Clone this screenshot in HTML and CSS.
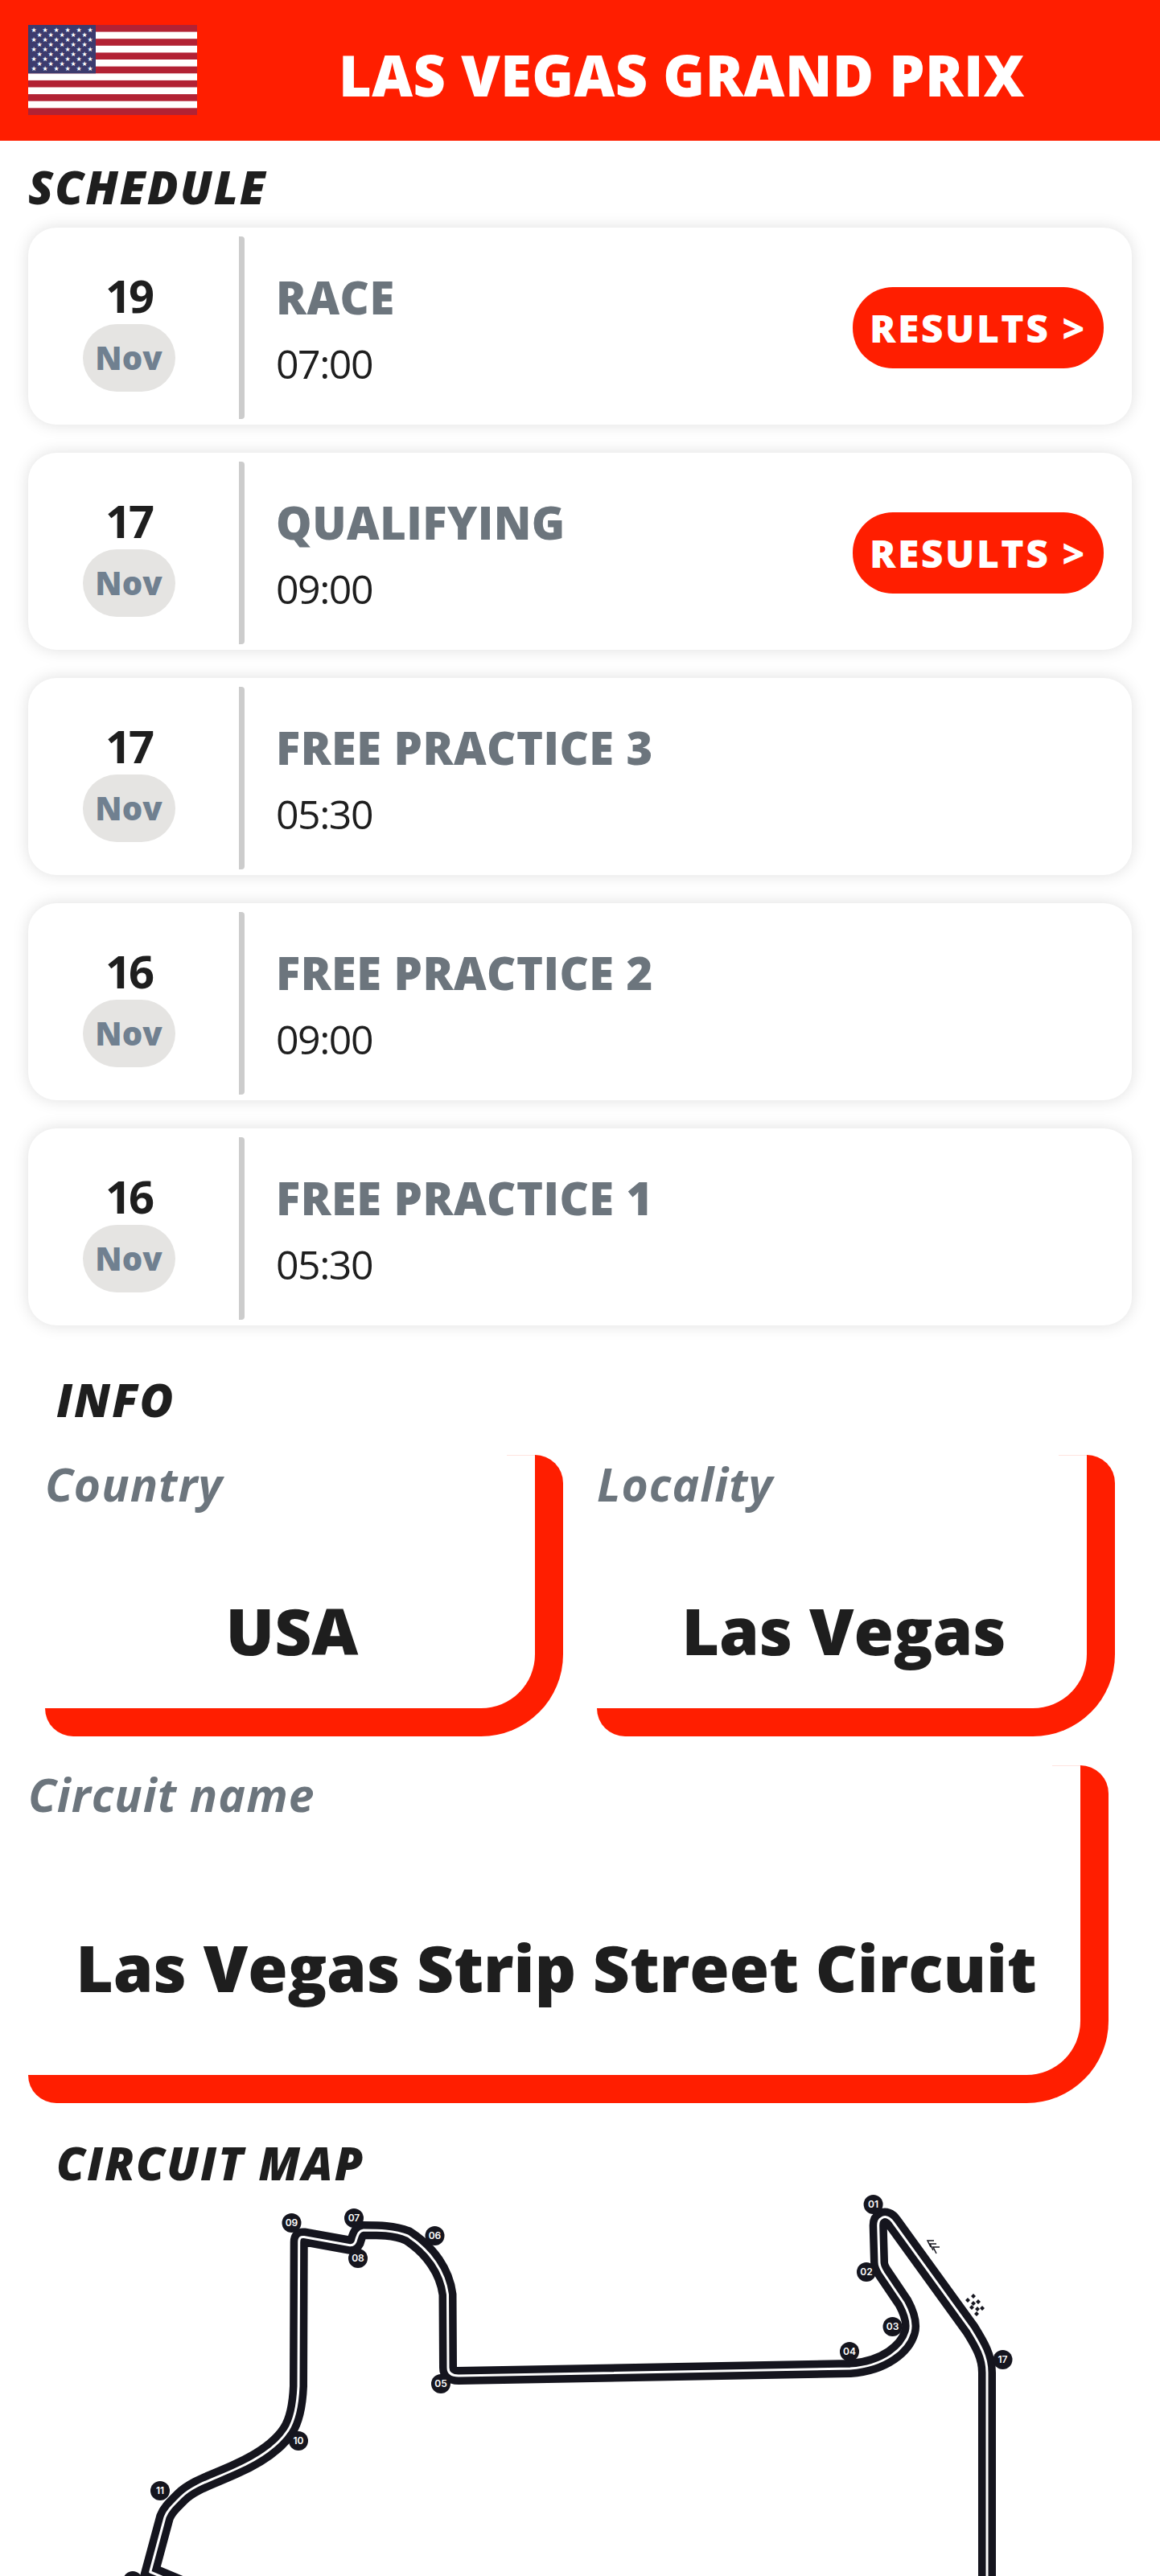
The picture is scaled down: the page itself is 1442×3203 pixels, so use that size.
FILE: index.html
```html
<!DOCTYPE html>
<html lang="en">
<head>
<meta charset="utf-8">
<title>Las Vegas Grand Prix</title>
<link rel="stylesheet" href="styles.css">
</head>
<body>
<header class="topbar">
  <svg class="flag" viewBox="0 0 210 112" aria-hidden="true">
    <rect width="210" height="112" fill="#b22234"/>
    <g fill="#fff">
      <rect y="8.6" width="210" height="8.6"/><rect y="25.8" width="210" height="8.6"/><rect y="43" width="210" height="8.6"/>
      <rect y="60.3" width="210" height="8.6"/><rect y="77.5" width="210" height="8.6"/><rect y="94.7" width="210" height="8.6"/>
    </g>
    <rect width="84" height="60.3" fill="#3c3b6e"/>
    <g fill="#fff" font-family="'DejaVu Sans', sans-serif" font-size="8" text-anchor="middle">
      <text x="7" y="9">★</text><text x="21" y="9">★</text><text x="35" y="9">★</text><text x="49" y="9">★</text><text x="63" y="9">★</text><text x="77" y="9">★</text>
      <text x="14" y="15">★</text><text x="28" y="15">★</text><text x="42" y="15">★</text><text x="56" y="15">★</text><text x="70" y="15">★</text>
      <text x="7" y="21">★</text><text x="21" y="21">★</text><text x="35" y="21">★</text><text x="49" y="21">★</text><text x="63" y="21">★</text><text x="77" y="21">★</text>
      <text x="14" y="27">★</text><text x="28" y="27">★</text><text x="42" y="27">★</text><text x="56" y="27">★</text><text x="70" y="27">★</text>
      <text x="7" y="33">★</text><text x="21" y="33">★</text><text x="35" y="33">★</text><text x="49" y="33">★</text><text x="63" y="33">★</text><text x="77" y="33">★</text>
      <text x="14" y="39">★</text><text x="28" y="39">★</text><text x="42" y="39">★</text><text x="56" y="39">★</text><text x="70" y="39">★</text>
      <text x="7" y="45">★</text><text x="21" y="45">★</text><text x="35" y="45">★</text><text x="49" y="45">★</text><text x="63" y="45">★</text><text x="77" y="45">★</text>
      <text x="14" y="51">★</text><text x="28" y="51">★</text><text x="42" y="51">★</text><text x="56" y="51">★</text><text x="70" y="51">★</text>
      <text x="7" y="57">★</text><text x="21" y="57">★</text><text x="35" y="57">★</text><text x="49" y="57">★</text><text x="63" y="57">★</text><text x="77" y="57">★</text>
    </g>
  </svg>
  <h1 class="race-title">LAS VEGAS GRAND PRIX</h1>
</header>

<h2 class="heading heading-schedule">SCHEDULE</h2>
<section class="sessions">
  <article class="session">
    <div class="date"><span class="day">19</span><span class="month">Nov</span></div>
    <div class="detail"><span class="name">RACE</span><span class="time">07:00</span></div>
    <a class="results" href="#">RESULTS &gt;</a>
  </article>
  <article class="session">
    <div class="date"><span class="day">17</span><span class="month">Nov</span></div>
    <div class="detail"><span class="name">QUALIFYING</span><span class="time">09:00</span></div>
    <a class="results" href="#">RESULTS &gt;</a>
  </article>
  <article class="session">
    <div class="date"><span class="day">17</span><span class="month">Nov</span></div>
    <div class="detail"><span class="name">FREE PRACTICE 3</span><span class="time">05:30</span></div>
  </article>
  <article class="session">
    <div class="date"><span class="day">16</span><span class="month">Nov</span></div>
    <div class="detail"><span class="name">FREE PRACTICE 2</span><span class="time">09:00</span></div>
  </article>
  <article class="session">
    <div class="date"><span class="day">16</span><span class="month">Nov</span></div>
    <div class="detail"><span class="name">FREE PRACTICE 1</span><span class="time">05:30</span></div>
  </article>
</section>

<h2 class="heading heading-info">INFO</h2>
<section class="info">
  <div class="info-row">
    <div class="info-card"><span class="label">Country</span><span class="value">USA</span></div>
    <div class="info-card"><span class="label">Locality</span><span class="value">Las Vegas</span></div>
  </div>
  <div class="info-card info-wide"><span class="label">Circuit name</span><span class="value">Las Vegas Strip Street Circuit</span></div>
</section>

<h2 class="heading heading-map">CIRCUIT MAP</h2>
<svg class="map" viewBox="0 2727 1442 476" aria-label="Circuit map">
  <g fill="none">
    <path stroke="#15151e" stroke-width="22" stroke-linejoin="miter" stroke-miterlimit="3" d="M1227 3215 L1227 2950 C1227 2930 1218 2915 1206.700 2896.700 L1110 2763 C1106 2757 1100 2755 1096 2758 C1092 2760 1091.500 2763 1091.700 2768 L1093 2813 C1093 2818 1095 2821 1098 2826 L1123 2863 C1130 2876 1134 2890 1131 2900 C1125 2920 1100 2942 1057 2945 L570 2954 C560 2954 557 2950 557 2944 L556.500 2853 C553 2825 535 2798 506.700 2780 C490 2773 470 2773 452 2773 C446 2774 445 2778 443 2784 C442 2789 439 2792 435 2791.700 L378 2781.500 C374 2781 371.700 2782 371.700 2788 L371 2967 C370 2990 367 3008 358 3022 C345 3042 320 3058 293 3070 C265 3083 240 3090 225 3105 C213 3117 208 3122 205 3130 L186.700 3198 L230 3216"/>
    <path stroke="#fff" stroke-width="3" stroke-linejoin="round" d="M1227 3215 L1227 2950 C1227 2930 1218 2915 1206.700 2896.700 L1110 2763 C1106 2757 1100 2755 1096 2758 C1092 2760 1091.500 2763 1091.700 2768 L1093 2813 C1093 2818 1095 2821 1098 2826 L1123 2863 C1130 2876 1134 2890 1131 2900 C1125 2920 1100 2942 1057 2945 L570 2954 C560 2954 557 2950 557 2944 L556.500 2853 C553 2825 535 2798 506.700 2780 C490 2773 470 2773 452 2773 C446 2774 445 2778 443 2784 C442 2789 439 2792 435 2791.700 L378 2781.500 C374 2781 371.700 2782 371.700 2788 L371 2967 C370 2990 367 3008 358 3022 C345 3042 320 3058 293 3070 C265 3083 240 3090 225 3105 C213 3117 208 3122 205 3130 L186.700 3198 L230 3216"/>
    <path stroke="#15151e" stroke-width="1.500" d="M1161 2786 L1153 2786 L1157 2794 M1164 2790 L1156 2790 L1160 2798 M1168 2794 L1160 2794 L1164 2802"/>
  </g>
  <g class="checker">
    <path d="M1210 2852 l3 3 l-3 3 l-3 -3z M1203 2857 l3 3 l-3 3 l-3 -3z M1210 2861 l3 3 l-3 3 l-3 -3z M1216 2859 l3 3 l-3 3 l-3 -3z M1208 2866 l3 3 l-3 3 l-3 -3z M1215 2868 l3 3 l-3 3 l-3 -3z M1221 2867 l3 3 l-3 3 l-3 -3z M1214 2874 l3 3 l-3 3 l-3 -3z"/>
  </g>
  <g class="turns" font-family="Inter, sans-serif" font-size="12" font-weight="600" text-anchor="middle">
    <circle cx="1085.600" cy="2741" r="12"/><text x="1085.600" y="2745">01</text>
    <circle cx="1077" cy="2825" r="12"/><text x="1077" y="2829">02</text>
    <circle cx="1109.500" cy="2893" r="12"/><text x="1109.500" y="2897">03</text>
    <circle cx="1056" cy="2924" r="12"/><text x="1056" y="2928">04</text>
    <circle cx="1246.500" cy="2934" r="12"/><text x="1246.500" y="2938">17</text>
    <circle cx="548" cy="2964" r="12"/><text x="548" y="2968">05</text>
    <circle cx="540.500" cy="2780" r="12"/><text x="540.500" y="2784">06</text>
    <circle cx="440" cy="2758" r="12"/><text x="440" y="2762">07</text>
    <circle cx="445" cy="2808" r="12"/><text x="445" y="2812">08</text>
    <circle cx="362.500" cy="2764" r="12"/><text x="362.500" y="2768">09</text>
    <circle cx="371" cy="3035" r="12"/><text x="371" y="3039">10</text>
    <circle cx="199" cy="3097" r="12"/><text x="199" y="3101">11</text>
    <circle cx="165" cy="3209" r="12"/>
  </g>
</svg>
</body>
</html>
```

FILE: styles.css
```css
* { box-sizing: border-box; }
html, body { margin: 0; padding: 0; background: #fff; }
body { width: 1442px; height: 3203px; overflow: hidden; font-family: "Open Sans", "Noto Sans", sans-serif; color: #1e1e1e; }
.topbar { height: 175px; background: #ff1e00; display: flex; align-items: flex-start; padding: 31px 0 0 35px; }
.flag { width: 210px; height: 112px; flex: none; }
.race-title { margin: 20px 0 0 176px; font-size: 70px; line-height: 84px; font-weight: 800; letter-spacing: .5px; color: #fff; white-space: nowrap; }
.heading { margin: 0; font-size: 57px; line-height: 76px; font-weight: 800; font-style: italic; letter-spacing: 2px; color: #1e1e1e; }
.heading-schedule { padding: 19px 0 0 35px; height: 108px; }
.heading-info { padding: 0 0 0 70px; margin: 54px 0 31px; }
.heading-map { padding: 0 0 0 70px; margin-top: 36px; }
.sessions { display: flex; flex-direction: column; gap: 35px; padding: 0 35px; }
.session { height: 245px; background: #fff; border-radius: 35px; box-shadow: 0 0 20px rgba(0,0,0,.13); display: flex; align-items: center; }
.date { width: 269px; height: 227px; margin-top: 3px; padding-right: 12px; border-right: 7px solid #ccc; border-radius: 4px; display: flex; flex-direction: column; align-items: center; justify-content: center; }
.day { font-size: 56px; line-height: 72px; font-weight: 700; letter-spacing: -3px; padding-top: 3px; }
.month { width: 115px; height: 84px; border-radius: 42px; background: #e5e4e2; color: #708090; font-size: 40px; line-height: 84px; font-weight: 800; text-align: center; }
.detail { flex: 1; display: flex; flex-direction: column; gap: 14px; padding: 6px 0 0 39px; }
.name { font-size: 56px; line-height: 72px; font-weight: 800; letter-spacing: .5px; color: #6c757d; white-space: nowrap; }
.time { font-size: 50px; line-height: 66px; letter-spacing: -1.5px; }
.results { width: 312px; height: 101px; margin: 3px 35px 0 0; border-radius: 50px; background: #ff1e00; color: #fff; font-size: 48px; line-height: 101px; font-weight: 800; text-align: center; letter-spacing: 2.5px; text-decoration: none; white-space: nowrap; }
.info { display: flex; flex-direction: column; gap: 36px; }
.info-row { display: flex; gap: 42px; padding-left: 56px; }
.info-card { position: relative; width: 644px; height: 350px; display: flex; flex-direction: column; gap: 90px; border-right: 35px solid #ff1e00; border-bottom: 35px solid #ff1e00; border-radius: 0 35px 102px 35px; }
.info-card::before { content: ""; position: absolute; top: 0; right: 0; width: 35px; height: 1px; background: #ffe3df; }
.info-wide { width: 1343px; height: 420px; margin-left: 35px; gap: 123px; }
.label { margin-top: -2px; font-size: 57px; line-height: 76px; font-weight: 700; font-style: italic; letter-spacing: 1px; color: #6c757d; }
.value { padding-left: 5px; font-size: 80px; line-height: 108px; font-weight: 800; text-align: center; white-space: nowrap; color: #1e1e1e; }
.map { display: block; width: 1442px; height: 476px; }
.checker path { fill: #15151e; }
.turns circle { fill: #15151e; }
.turns text { fill: #fff; }
```
